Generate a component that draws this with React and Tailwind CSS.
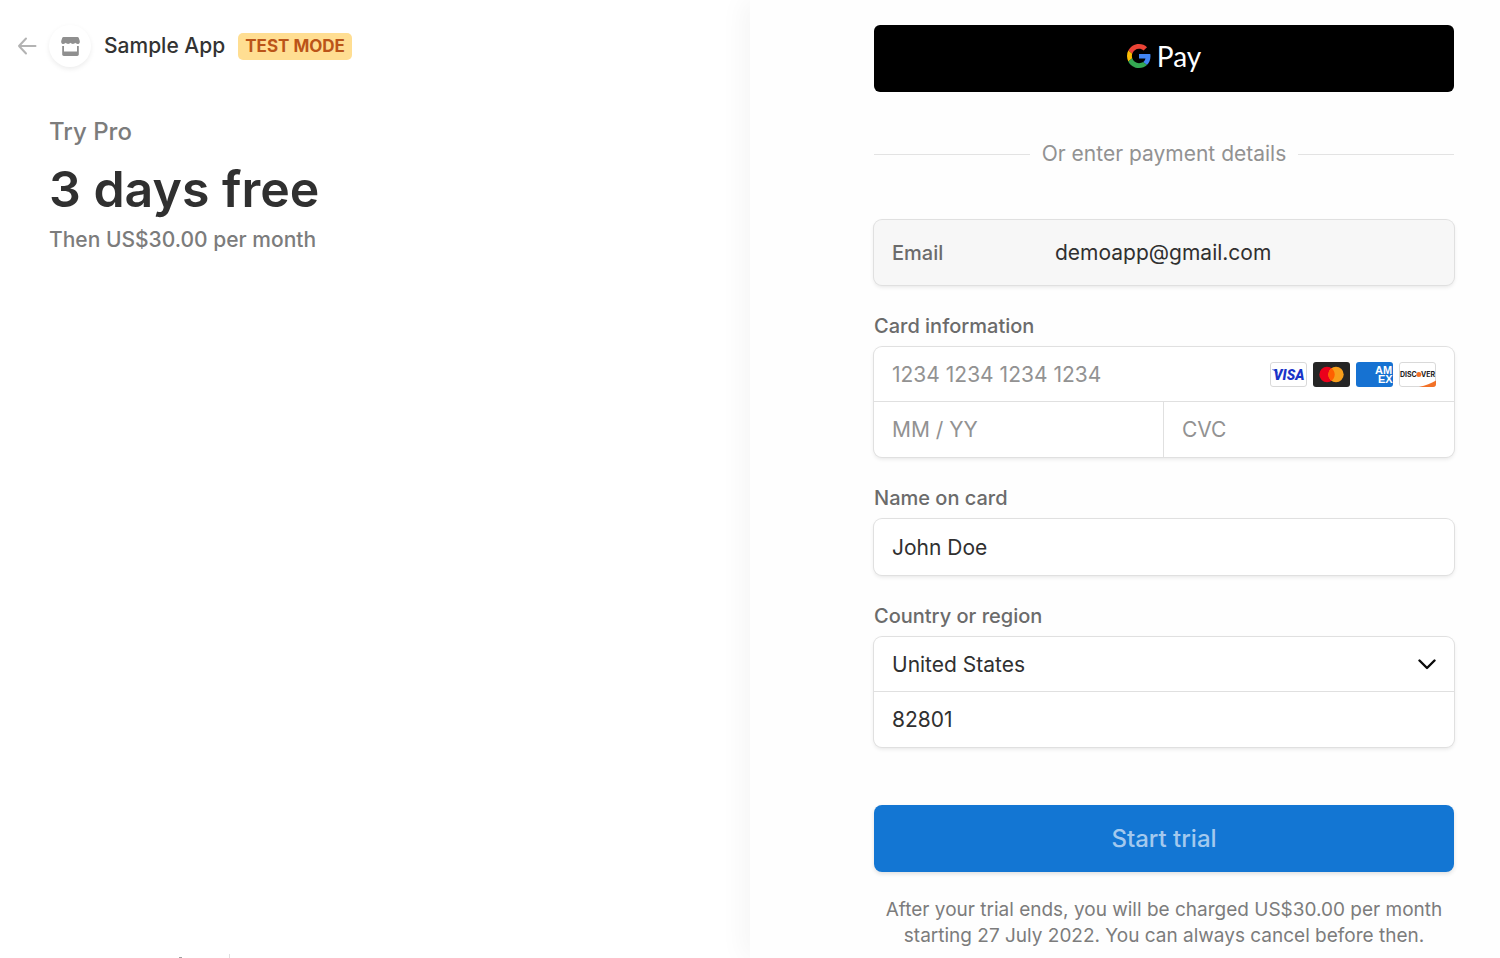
import React, { useState } from 'react';

// -----------------------------------------------------------------------------
// ICONS
// -----------------------------------------------------------------------------
const BackIcon = () => (
    <svg viewBox="0 0 20 18" className="w-5 h-[18px]" fill="none" stroke="#b3b3b3" strokeWidth="2" strokeLinecap="round" strokeLinejoin="round" aria-hidden="true">
        <path d="M18.500 9H2M9 1.500L2 9L9 16.500" />
    </svg>
);

const StoreIcon = () => (
    <svg viewBox="0 0 19 19" className="w-[19px] h-[19px]" fill="#8f8f8f" aria-hidden="true">
        <path d="M2.500 0h14c.6 0 1 .3 1.200.8L18.700 3.800c.5 1.700-.6 3.200-2.100 3.200-1 0-1.800-.5-2.300-1.200-.5.700-1.400 1.200-2.400 1.200s-1.900-.5-2.400-1.200C9 6.500 8.100 7 7.100 7s-1.900-.5-2.400-1.200C4.200 6.500 3.400 7 2.400 7 .9 7-.2 5.500.3 3.800L1.300.8C1.500.3 1.900 0 2.500 0z" />
        <path d="M1.200 9H3v5.500h13V9h1.800v8.300c0 .9-.7 1.700-1.600 1.700H2.800c-.9 0-1.600-.8-1.600-1.700z" />
    </svg>
);

const GoogleIcon = () => (
    <svg viewBox="0 0 48 48" className="w-6 h-6" aria-hidden="true">
        <path fill="#EA4335" d="M24 9.500c3.540 0 6.710 1.220 9.210 3.600l6.850-6.850C35.900 2.380 30.470 0 24 0 14.620 0 6.510 5.380 2.560 13.220l7.980 6.190C12.430 13.720 17.740 9.500 24 9.500z" />
        <path fill="#4285F4" d="M46.980 24.550c0-1.570-.15-3.090-.38-4.550H24v9.020h12.940c-.58 2.960-2.260 5.480-4.780 7.180l7.730 6c4.510-4.180 7.090-10.360 7.090-17.650z" />
        <path fill="#FBBC05" d="M10.530 28.590c-.48-1.450-.76-2.990-.76-4.590s.27-3.140.76-4.590l-7.980-6.190C.92 16.460 0 20.120 0 24c0 3.880.92 7.540 2.560 10.780l7.970-6.190z" />
        <path fill="#34A853" d="M24 48c6.480 0 11.930-2.130 15.890-5.810l-7.730-6c-2.150 1.450-4.920 2.300-8.160 2.300-6.260 0-11.570-4.220-13.470-9.910l-7.980 6.190C6.510 42.620 14.620 48 24 48z" />
    </svg>
);

const VisaIcon = () => (
    <svg viewBox="0 0 37 25" className="w-[37px] h-[25px]" role="img" aria-label="Visa">
        <rect x=".5" y=".5" width="36" height="24" rx="2.500" fill="#fff" stroke="#d9d9d9" />
        <path d="M2 7.500h4.500l1.500 4.500c-1.200-2-3-3.400-6-4.200z" fill="#1a34c8" />
        <text x="19" y="17.500" textAnchor="middle" fontFamily="Roboto, sans-serif" fontSize="14" fontWeight="900" fontStyle="italic" fill="#1a34c8">VISA</text>
    </svg>
);

const MastercardIcon = () => (
    <svg viewBox="0 0 37 25" className="w-[37px] h-[25px]" role="img" aria-label="Mastercard">
        <rect width="37" height="25" rx="3" fill="#252525" />
        <circle cx="14" cy="12.500" r="7.700" fill="#eb001b" />
        <circle cx="23" cy="12.500" r="7.700" fill="#f79e1b" />
        <path d="M18.500 6.250a7.700 7.700 0 0 1 0 12.500a7.700 7.700 0 0 1 0-12.500z" fill="#ff5f00" />
    </svg>
);

const AmexIcon = () => (
    <svg viewBox="0 0 37 25" className="w-[37px] h-[25px]" role="img" aria-label="American Express">
        <rect width="37" height="25" rx="3" fill="#1672d2" />
        <g fontFamily="Liberation Sans, sans-serif" fontSize="11" fontWeight="700" fill="#fff">
            <text x="19" y="12">AM</text>
            <text x="22" y="21">EX</text>
        </g>
    </svg>
);

const DiscoverIcon = () => (
    <svg viewBox="0 0 37 25" className="w-[37px] h-[25px]" role="img" aria-label="Discover">
        <rect x=".5" y=".5" width="36" height="24" rx="2.500" fill="#fff" stroke="#d9d9d9" />
        <path d="M20 25c7-1.500 12-3.600 17-6.500V22a3 3 0 0 1-3 3z" fill="#f27127" />
        <g fontFamily="Inter, sans-serif" fontSize="7" fontWeight="700" fill="#222">
            <text x="1" y="15">DISC</text>
            <text x="36" y="15" textAnchor="end">VER</text>
        </g>
        <circle cx="19.800" cy="12.500" r="2.500" fill="#f27127" />
    </svg>
);

const ChevronIcon = () => (
    <svg viewBox="0 0 18 11" className="w-[18px] h-[11px] shrink-0" fill="none" stroke="#0a0a0a" strokeWidth="2.400" strokeLinecap="round" strokeLinejoin="round" aria-hidden="true">
        <path d="M1.500 1.500L9 9L16.500 1.500" />
    </svg>
);

// -----------------------------------------------------------------------------
// FORM PIECES
// -----------------------------------------------------------------------------
const FieldBox = ({ children }) => (
    <div className="rounded-lg bg-white ring-1 ring-[#e0e0e0] shadow-[0_2px_4px_rgba(0,0,0,0.1)]">{children}</div>
);

const FieldLabel = ({ htmlFor, children }) => (
    <label htmlFor={htmlFor} className="block mt-7 mb-2 text-[20px] leading-[26px] font-medium text-[#6b6b6b]">{children}</label>
);

const inputClass = 'block w-full min-w-0 bg-transparent px-[18px] text-[21px] text-[#303030] placeholder:text-[#929292] outline-none';

// -----------------------------------------------------------------------------
// PAGE
// -----------------------------------------------------------------------------
export default function App() {
    const [card, setCard] = useState({ number: '', expiry: '', cvc: '' });
    const [name, setName] = useState('John Doe');
    const [country, setCountry] = useState('US');
    const [zip, setZip] = useState('82801');

    const updateCard = (e) => setCard(prev => ({ ...prev, [e.target.name]: e.target.value }));

    return (
        <div className="flex h-screen overflow-hidden bg-white font-['Inter',sans-serif]">
            <section className="w-1/2 flex flex-col">
                <header className="flex items-center pl-[17px] pt-[25px]">
                    <a href="#back" aria-label="Back"><BackIcon /></a>
                    <div className="ml-3 w-[42px] h-[42px] rounded-full flex items-center justify-center shadow-[0_2px_5px_rgba(0,0,0,0.08)]">
                        <StoreIcon />
                    </div>
                    <span className="ml-[13px] text-[21px] leading-7 font-medium text-[#333]">Sample App</span>
                    <span className="ml-[13px] px-[7px] rounded-[5px] bg-[#ffde92] text-[17px] leading-[27px] font-bold text-[#bb5418]">TEST MODE</span>
                </header>

                <div className="pl-[49px] mt-[49px]">
                    <p className="text-[24px] leading-8 font-medium text-[#7c7c7c]">Try Pro</p>
                    <h1 className="mt-2 text-[50px] leading-[66px] font-semibold text-[#303030]">3 days free</h1>
                    <p className="mt-1 text-[21px] leading-7 font-medium text-[#7c7c7c]">Then US$30.00 per month</p>
                </div>

                <footer className="mt-auto pl-[179px] flex items-end gap-[47px]">
                    <span className="w-[3px] h-px bg-[#a0a0a0]" />
                    <span className="w-px h-1 bg-[#e0e0e0]" />
                </footer>
            </section>

            <main className="relative w-1/2 bg-[#fefefe] pl-[124px] pr-[46px] pt-[25px] shadow-[-8px_0_24px_rgba(0,0,0,0.04)]">
                <button type="button" aria-label="Google Pay" className="w-full h-[67px] pb-[6px] rounded-md bg-black flex items-center justify-center gap-[6px]">
                    <GoogleIcon />
                    <span className="font-['Lato',sans-serif] text-[28px] leading-8 text-white">Pay</span>
                </button>

                <div className="mt-[49px] flex items-center gap-3">
                    <span className="flex-1 h-px bg-[#e3e3e3]" />
                    <span className="text-[21px] leading-[26px] text-[#929292]">Or enter payment details</span>
                    <span className="flex-1 h-px bg-[#e3e3e3]" />
                </div>

                <form onSubmit={e => e.preventDefault()}>
                    <div className="mt-[53px] h-[65px] px-[18px] flex items-center rounded-lg bg-[#f7f7f7] ring-1 ring-[#e0e0e0] shadow-[0_2px_4px_rgba(0,0,0,0.1)]">
                        <label htmlFor="email" className="w-[163px] text-[20px] font-medium text-[#6b6b6b]">Email</label>
                        <input id="email" type="email" readOnly value="demoapp@gmail.com" className="flex-1 min-w-0 bg-transparent text-[21px] text-[#303030] outline-none" />
                    </div>

                    <FieldLabel htmlFor="number">Card information</FieldLabel>
                    <FieldBox>
                        <div className="flex items-center pr-[18px] border-b border-[#e0e0e0]">
                            <input id="number" name="number" value={card.number} onChange={updateCard} placeholder="1234 1234 1234 1234" className={`${inputClass} h-[54px]`} />
                            <div className="flex gap-[6px] shrink-0">
                                <VisaIcon />
                                <MastercardIcon />
                                <AmexIcon />
                                <DiscoverIcon />
                            </div>
                        </div>
                        <div className="grid grid-cols-2">
                            <input name="expiry" aria-label="Expiry date" value={card.expiry} onChange={updateCard} placeholder="MM / YY" className={`${inputClass} h-[55px] border-r border-[#e0e0e0]`} />
                            <input name="cvc" aria-label="CVC" value={card.cvc} onChange={updateCard} placeholder="CVC" className={`${inputClass} h-[55px]`} />
                        </div>
                    </FieldBox>

                    <FieldLabel htmlFor="name">Name on card</FieldLabel>
                    <FieldBox>
                        <input id="name" value={name} onChange={e => setName(e.target.value)} className={`${inputClass} h-14`} />
                    </FieldBox>

                    <FieldLabel htmlFor="country">Country or region</FieldLabel>
                    <FieldBox>
                        <div className="flex items-center pr-[18px] border-b border-[#e0e0e0]">
                            <select id="country" value={country} onChange={e => setCountry(e.target.value)} className={`${inputClass} h-[54px] pt-px appearance-none`}>
                                <option value="US">United States</option>
                            </select>
                            <ChevronIcon />
                        </div>
                        <input aria-label="ZIP" value={zip} onChange={e => setZip(e.target.value)} className={`${inputClass} h-[55px]`} />
                    </FieldBox>

                    <button type="submit" className="mt-[58px] w-full h-[67px] rounded-lg bg-[#1376d3] text-[24px] font-medium text-[#a3c9ee] shadow-[0_2px_4px_rgba(0,0,0,0.12)]">
                        Start trial
                    </button>
                </form>

                <p className="mt-[25px] text-center text-[19px] leading-[26px] text-[#7c7c7c]">
                    After your trial ends, you will be charged US$30.00 per month starting 27 July 2022. You can always cancel before then.
                </p>
            </main>
        </div>
    );
}
